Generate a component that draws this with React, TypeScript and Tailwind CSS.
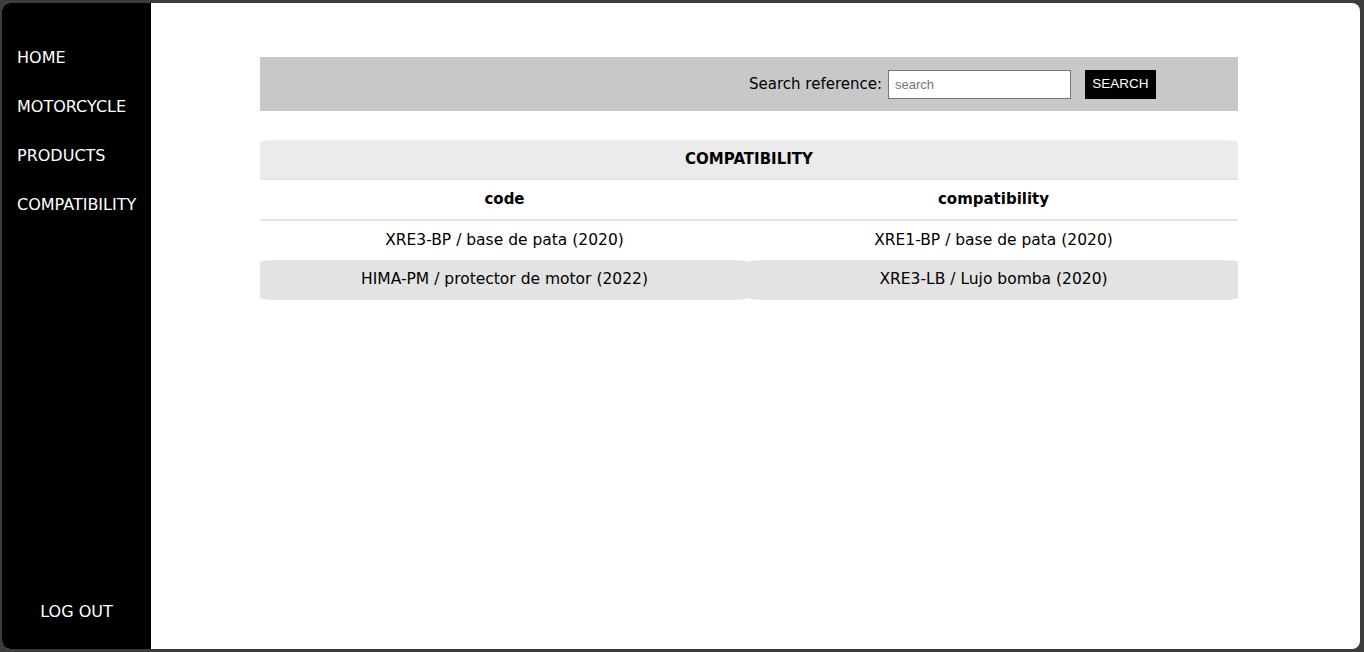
const NAV_ITEMS = ["HOME", "MOTORCYCLE", "PRODUCTS", "COMPATIBILITY"];

const ROWS = [
	{ code: "XRE3-BP / base de pata (2020)", compat: "XRE1-BP / base de pata (2020)" },
	{ code: "HIMA-PM / protector de motor (2022)", compat: "XRE3-LB / Lujo bomba (2020)" },
];

export default function App() {
	return (
		<div className="h-[652px] w-[1364px] bg-[#3c3c3c] pt-[3px] pr-[4px] pb-[3px] pl-[2px]">
			<div className="flex h-full w-full overflow-hidden rounded-[8px] bg-white font-['DejaVu_Sans',sans-serif]">
				<aside className="flex w-[149px] shrink-0 flex-col justify-between bg-black text-white">
					<nav className="flex flex-col pt-[45px]">
						{NAV_ITEMS.map((item) => (
							<a
								key={item}
								href="#"
								className="block h-[49px] pl-[15px] text-[16px] leading-[20px]"
							>
								{item}
							</a>
						))}
					</nav>
					<div className="pb-[27px] text-center text-[16px] leading-[20px]">
						<a href="#">LOG OUT</a>
					</div>
				</aside>

				<main className="flex-1 pt-[54px] pl-[109px]">
					<div className="flex h-[54px] w-[978px] items-center justify-end bg-[#c8c8c8] pr-[82px]">
						<label className="text-[15px] text-black">Search reference:</label>
						<input
							type="text"
							placeholder="search"
							className="ml-[6px] h-[29px] w-[183px] border border-[#767676] bg-white px-[6px] font-['Liberation_Sans',sans-serif] text-[13px] text-black placeholder:text-[#757575] outline-none"
						/>
						<button
							type="button"
							className="ml-[14px] h-[29px] w-[71px] bg-black font-['Liberation_Sans',sans-serif] text-[13.5px] text-white"
						>
							SEARCH
						</button>
					</div>

					<table className="mt-[29px] w-[978px] table-fixed border-collapse text-[15.5px] text-black">
						<thead>
							<tr>
								<th
									colSpan={2}
									className="h-[39px] rounded-[20px_/_2px] bg-[#ebebeb] text-[15px] font-bold"
								>
									COMPATIBILITY
								</th>
							</tr>
							<tr className="border-y-2 border-[#e3e3e3]">
								<th className="h-[41px] text-[15px] font-bold">code</th>
								<th className="h-[41px] text-[15px] font-bold">compatibility</th>
							</tr>
						</thead>
						<tbody>
							{ROWS.map((row, i) => (
								<tr key={row.code}>
									<td
										className={`h-[40px] text-center ${i % 2 === 1 ? "rounded-[20px_/_2px] bg-[#e3e3e3]" : ""}`}
									>
										{row.code}
									</td>
									<td
										className={`h-[40px] text-center ${i % 2 === 1 ? "rounded-[20px_/_2px] bg-[#e3e3e3]" : ""}`}
									>
										{row.compat}
									</td>
								</tr>
							))}
						</tbody>
					</table>
				</main>
			</div>
		</div>
	);
}
